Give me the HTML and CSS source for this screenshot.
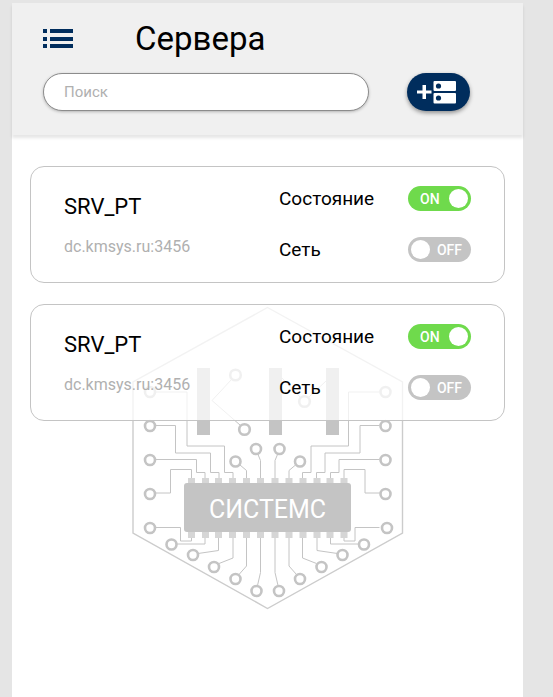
FILE: index.html
```
<!DOCTYPE html>
<html lang="ru">
  <head>
    <meta charset="utf-8">
    <meta name="viewport" content="width=device-width, initial-scale=1">
    <title>Сервера</title>
    <link rel="stylesheet" href="styles.css">
  </head>
  <body>
    <div class="page">
      <header class="header">
        <div class="title-row">
          <button class="menu-btn" type="button" aria-label="Меню">
            <svg width="30" height="20" viewBox="0 0 30 20" fill="#002d5d">
              <path d="M0 0h4v4H0zM7 0h23v4H7zM0 8h4v4H0zM7 8h23v4H7zM0 15h4v4H0zM7 15h23v4H7z"/>
            </svg>
          </button>
          <h1 class="title">Сервера</h1>
        </div>
        <div class="search-row">
          <input class="search" type="search" placeholder="Поиск" aria-label="Поиск">
          <button class="add-btn" type="button" aria-label="Добавить сервер">
            <svg width="44" height="24" viewBox="0 0 44 24">
              <path d="M0 10.500h14.500v3H0zM5.500 5h3.500v14H5.500z" fill="#fff"/>
              <rect x="16.500" y="1" width="22.500" height="10" rx="1" fill="#fff"/>
              <rect x="16.500" y="13" width="22.500" height="10.500" rx="1" fill="#fff"/>
              <circle cx="21.500" cy="6" r="2.600" fill="#002d5d"/>
              <circle cx="21.500" cy="18" r="2.600" fill="#002d5d"/>
            </svg>
          </button>
        </div>
      </header>

      <main class="servers">
        <svg class="watermark" width="272" height="304" viewBox="132 306 272 304" fill="none" stroke="#c4c4c4" aria-hidden="true">
          <path d="M267.500 307.500L402.500 382v151L267.500 608.500L133 533V382z" stroke="#cccccc" stroke-width="1.400"/>
          <g fill="#c4c4c4" stroke="none">
            <rect x="197" y="368" width="13" height="67"/>
            <rect x="269" y="368" width="13" height="67"/>
            <rect x="326" y="368" width="13" height="67"/>
          </g>
          <path d="M231.500 379.500L212 400.500L240 425M282 378L300.500 397.500M308.500 397.500L326 381"/>
          <g stroke-width="2.600">
            <circle cx="235.500" cy="375" r="5.300"/>
            <circle cx="244.500" cy="429.500" r="5.300"/>
            <circle cx="304.500" cy="401.500" r="5.300"/>
            <circle cx="150" cy="528" r="5"/>
            <circle cx="387" cy="528" r="5"/>
          </g>
          <g id="half">
            <path d="M156 392h31v54h37.500v26.500h8.500v6M156 425.500h19.500V453h35v19.500h8.500v6M156 459.500h40.500v13h8.500v6M156 493h14.500v-23.500h21v9M156 527.500h24.500v13.500h11v-3M177 544h28v-6M198 553.500l20.500-3V538M219 563.500l14-5.500v-20M239 574.500l7.500-8.500v-28M257.500 585.500l3-13V538M240 465l6.500 5.500v8M258 454.500l2.500 6v18"/>
            <g stroke-width="2.600">
              <circle cx="150" cy="392" r="5"/>
              <circle cx="150" cy="426" r="5"/>
              <circle cx="150" cy="460" r="5"/>
              <circle cx="150" cy="494" r="5"/>
              <circle cx="171.500" cy="544.500" r="5"/>
              <circle cx="193" cy="555" r="5"/>
              <circle cx="214" cy="567" r="5"/>
              <circle cx="235.500" cy="579" r="5"/>
              <circle cx="256.500" cy="591" r="5"/>
              <circle cx="235.500" cy="461.500" r="5"/>
              <circle cx="256" cy="449" r="5"/>
            </g>
            <path d="M188 478h7v60h-7zM202 478h7v60h-7zM215 478h7v60h-7zM229 478h7v60h-7zM243 478h7v60h-7zM257 478h7v60h-7z" fill="#d6d6d6" stroke="none"/>
          </g>
          <use href="#half" transform="translate(535.500 0) scale(-1 1)"/>
          <rect x="184" y="483" width="167" height="49" rx="3" fill="#c4c4c4" stroke="none"/>
          <text class="watermark-text" x="267.500" y="518" text-anchor="middle">СИСТЕМС</text>
        </svg>

        <section class="card">
          <div class="info">
            <h2 class="name">SRV_PT</h2>
            <p class="address">dc.kmsys.ru:3456</p>
          </div>
          <div class="switches">
            <label class="switch-row">
              <span class="label">Состояние</span>
              <input class="switch-input" type="checkbox" checked>
              <span class="switch"></span>
            </label>
            <label class="switch-row">
              <span class="label">Сеть</span>
              <input class="switch-input" type="checkbox">
              <span class="switch"></span>
            </label>
          </div>
        </section>

        <section class="card">
          <div class="info">
            <h2 class="name">SRV_PT</h2>
            <p class="address">dc.kmsys.ru:3456</p>
          </div>
          <div class="switches">
            <label class="switch-row">
              <span class="label">Состояние</span>
              <input class="switch-input" type="checkbox" checked>
              <span class="switch"></span>
            </label>
            <label class="switch-row">
              <span class="label">Сеть</span>
              <input class="switch-input" type="checkbox">
              <span class="switch"></span>
            </label>
          </div>
        </section>
      </main>
    </div>
  </body>
</html>
```
FILE: styles.css
```
* {
  box-sizing: border-box;
}
body {
  margin: 0;
  padding: 3px 30px 0 12px;
  min-height: 100vh;
  display: flex;
  background: #e5e5e5;
  color: #000;
  font-family: Roboto, "Noto Sans", sans-serif;
}
h1, h2, p {
  margin: 0;
  font-weight: 400;
}
button {
  border: none;
  padding: 0;
  cursor: pointer;
}

.page {
  flex: 1;
  background: #fff;
}

/* header */
.header {
  padding: 16px 53px 24px 31px;
  background: #f0f0f0;
  box-shadow: 0 3px 3px rgba(0, 0, 0, 0.1);
}
.title-row {
  display: flex;
  align-items: center;
  gap: 62px;
}
.menu-btn {
  display: flex;
  background: none;
}
.title {
  font-size: 33px;
  line-height: 40px;
}
.search-row {
  display: flex;
  gap: 38px;
  margin-top: 14px;
}
.search {
  flex: 1;
  min-width: 0;
  height: 38px;
  padding: 0 20px;
  border: 1px solid #8c8c8c;
  border-radius: 19px;
  background: #fff;
  box-shadow: 0 1px 3px rgba(0, 0, 0, 0.25);
  font-family: inherit;
  font-size: 15px;
  appearance: none;
}
.search::placeholder {
  color: #b0b0b0;
}
.add-btn {
  display: flex;
  align-items: center;
  justify-content: center;
  width: 63px;
  height: 38px;
  border-radius: 19px;
  background: #002d5d;
  box-shadow: 0 2px 4px rgba(0, 0, 0, 0.4);
}

/* server list */
.servers {
  position: relative;
  display: flex;
  flex-direction: column;
  gap: 21px;
  padding: 31px 18px;
}
.watermark {
  position: absolute;
  top: 171px;
  left: 50%;
  transform: translateX(-50%);
}
.watermark-text {
  fill: #fff;
  stroke: none;
  font-size: 25px;
}
.card {
  position: relative;
  display: flex;
  justify-content: space-between;
  padding: 19px 33px 20px 33px;
  border: 1px solid #c4c4c4;
  border-radius: 14px;
  background: rgba(255, 255, 255, 0.75);
}
.name {
  margin-top: 8px;
  font-size: 22px;
  line-height: 26px;
}
.address {
  margin-top: 17px;
  font-size: 16px;
  line-height: 20px;
  color: #b0b0b0;
}
.switches {
  display: flex;
  flex-direction: column;
  gap: 26px;
  width: 192px;
}
.switch-row {
  display: flex;
  align-items: center;
  justify-content: space-between;
  cursor: pointer;
}
.label {
  font-size: 19px;
  line-height: 25px;
}
.switch-input {
  position: absolute;
  opacity: 0;
}
.switch {
  display: flex;
  align-items: center;
  justify-content: space-between;
  width: 63px;
  height: 25px;
  padding: 0 3px;
  border-radius: 13px;
  background: #c4c4c4;
  color: #fff;
  font-size: 14px;
  font-weight: 500;
}
.switch::before {
  content: "";
  width: 19px;
  height: 19px;
  border-radius: 50%;
  background: #fff;
}
.switch::after {
  content: "OFF";
  padding-right: 6px;
}
.switch-input:checked + .switch {
  flex-direction: row-reverse;
  background: #6fda4c;
}
.switch-input:checked + .switch::after {
  content: "ON";
  padding: 0 0 0 9px;
}
```
